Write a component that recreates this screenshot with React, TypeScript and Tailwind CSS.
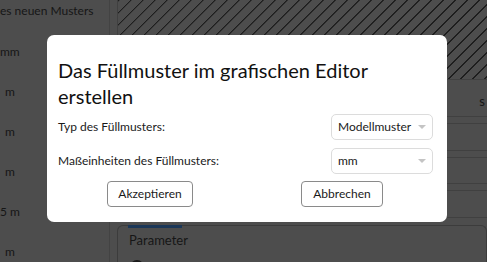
const font = { fontFamily: 'Lato, "Noto Sans", sans-serif' }

function LeftPanel() {
  const rows = ['mm', 'm', 'm', 'm', '5 m', 'm']
  return (
    <div className="w-[110px] shrink-0 overflow-hidden border-r border-[#434343] text-[12px] text-[#161616]">
      <div className="h-[21px] leading-[21px] whitespace-nowrap">es neuen Musters</div>
      {rows.map((r, i) => (
        <div key={i} className={`h-[40px] pt-[21px] leading-[20px] ${r === 'm' ? 'pl-[5px]' : ''}`}>
          {r}
        </div>
      ))}
    </div>
  )
}

function RightPanel() {
  return (
    <div className="flex min-w-0 flex-1 flex-col pl-[7px]">
      <div className="h-[80px] shrink-0 border-b border-l border-[#404040] bg-[repeating-linear-gradient(135deg,#1e1e1e_0px,#1e1e1e_1px,#4d4d4d_1.6px,#4d4d4d_8.5px)]" />
      <div className="h-[37px] shrink-0 border-b border-[#404040] pr-[2px] pt-[12px] text-right text-[13px] text-[#161616]">s</div>
      <div className="mt-[6px] h-[28px] shrink-0 border-y border-[#404040]" />
      <div className="mt-[6px] h-[27px] shrink-0 border-y border-[#404040]" />
      <div className="mt-[6px] h-[28px] shrink-0 border-y border-[#404040]" />
      <div className="relative mt-[7px] h-[60px] shrink-0 rounded-t-[6px] border border-b-0 border-[#3c3c3c]">
        <div className="absolute left-[10px] top-[-1px] h-[3px] w-[54px] bg-[#1b3758]" />
        <div className="pl-[11px] pt-[5px] text-[13px] text-[#161616]">Parameter</div>
        <div className="absolute left-[12px] top-[34px] h-[14px] w-[14px] rounded-full bg-[#1a1a1a]" />
      </div>
    </div>
  )
}

function Select({ value }: { value: string }) {
  return (
    <div className="flex h-[26px] w-[102px] items-center justify-between rounded-[5px] border border-[#dcdcdc] pl-[6px] pr-[6px] text-[12px] text-[#1a1a1a]">
      <span>{value}</span>
      <span className="h-0 w-0 border-x-[4px] border-t-[4px] border-x-transparent border-t-[#c4c4c4]" />
    </div>
  )
}

function Dialog() {
  return (
    <div className="absolute left-[47px] top-[35px] h-[187px] w-[400px] rounded-[7px] bg-white pl-[11px] pr-[14px] pt-[22px]">
      <h1 className="text-[20px] leading-[26px] text-[#111]">Das Füllmuster im grafischen Editor erstellen</h1>
      <div className="mt-[5px] flex items-center justify-between">
        <span className="text-[12px] text-[#1a1a1a]">Typ des Füllmusters:</span>
        <Select value="Modellmuster" />
      </div>
      <div className="mt-[8px] flex items-center justify-between">
        <span className="text-[12px] text-[#1a1a1a]">Maßeinheiten des Füllmusters:</span>
        <Select value="mm" />
      </div>
      <div className="mt-[7px] flex">
        <button className="ml-[49px] h-[26px] w-[86px] rounded-[4px] border border-[#8a8a8a] text-[12px] text-[#1a1a1a]">
          Akzeptieren
        </button>
        <button className="ml-[108px] h-[26px] w-[82px] rounded-[4px] border border-[#8a8a8a] text-[12px] text-[#1a1a1a]">
          Abbrechen
        </button>
      </div>
    </div>
  )
}

export default function App() {
  return (
    <div style={font} className="relative flex h-[262px] w-[487px] overflow-hidden bg-[#4d4d4d]">
      <LeftPanel />
      <RightPanel />
      <Dialog />
    </div>
  )
}
